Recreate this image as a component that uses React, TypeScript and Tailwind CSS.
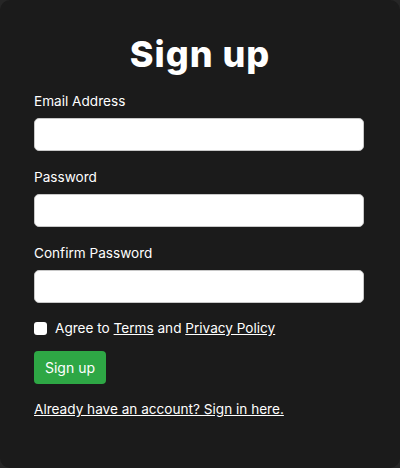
export default function App() {
  return (
    <div className="w-[400px] h-[468px] bg-[#262626] font-['Inter','Liberation_Sans',sans-serif]">
      <div className="w-full h-full rounded-[10px] bg-[#1b1b1b] px-[34px] pt-[30px] text-white">
        {/* Title */}
        <h1 className="text-center text-[36px] leading-[48px] font-extrabold tracking-[1px]">
          Sign up
        </h1>

        {/* Fields */}
        <div className="mt-[13px] w-[330px] text-[13.6px] leading-[20px]">
          <label className="block">Email Address</label>
          <input
            type="email"
            className="mt-[7px] block w-full h-[33px] rounded-[5px] border border-[#c8c8c8] bg-white px-2 text-black outline-none"
          />

          <label className="mt-[16px] block">Password</label>
          <input
            type="password"
            className="mt-[7px] block w-full h-[33px] rounded-[5px] border border-[#c8c8c8] bg-white px-2 text-black outline-none"
          />

          <label className="mt-[16px] block">Confirm Password</label>
          <input
            type="password"
            className="mt-[7px] block w-full h-[33px] rounded-[5px] border border-[#c8c8c8] bg-white px-2 text-black outline-none"
          />
        </div>

        {/* Terms */}
        <div className="mt-[15px] flex items-center gap-[8px] text-[13.6px] leading-[20px]">
          <span className="w-[13px] h-[13px] rounded-[3px] bg-white" />
          <span>
            Agree to <a className="underline">Terms</a> and <a className="underline">Privacy Policy</a>
          </span>
        </div>

        <button className="mt-[13px] h-[33px] px-[11px] rounded-[4px] bg-[#2ea745] text-[14px] text-white">
          Sign up
        </button>

        <div className="mt-[15px] text-[13.6px] leading-[20px]">
          <a className="underline">Already have an account? Sign in here.</a>
        </div>
      </div>
    </div>
  );
}
